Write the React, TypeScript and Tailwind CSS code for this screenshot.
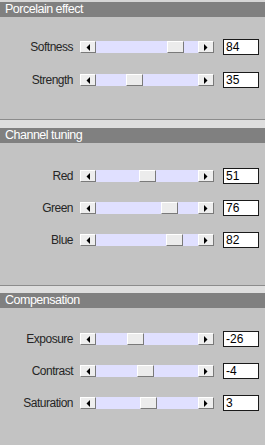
import React from "react";

type Row = { label: string; value: number; min: number; max: number };

function Arrow({ dir }: { dir: "l" | "r" }) {
  return (
    <svg width="4" height="7" viewBox="0 0 4 7" className="block">
      {dir === "l" ? (
        <polygon points="4,0 4,7 0.5,3.5" fill="#000" />
      ) : (
        <polygon points="0,0 0,7 3.5,3.5" fill="#000" />
      )}
    </svg>
  );
}

function Btn({ dir }: { dir: "l" | "r" }) {
  return (
    <div className="w-[16px] h-[12px] flex items-center justify-center bg-[#eeeeee] border border-t-white border-l-white border-r-[#7a7a7a] border-b-[#7a7a7a]">
      <Arrow dir={dir} />
    </div>
  );
}

function Slider({ row }: { row: Row }) {
  const t = (row.value - row.min) / (row.max - row.min);
  const left = Math.round(85 * t);
  return (
    <div className="flex items-center h-[12px] w-[134px]">
      <Btn dir="l" />
      <div className="relative w-[102px] h-[12px] bg-[#e0e0ff]">
        <div
          className="absolute top-0 w-[17px] h-[12px] bg-[#ececec] border border-t-white border-l-white border-r-[#7a7a7a] border-b-[#7a7a7a]"
          style={{ left }}
        />
      </div>
      <Btn dir="r" />
    </div>
  );
}

function SliderRow({ row }: { row: Row }) {
  return (
    <div className="flex items-center h-[16px]">
      <div className="w-[74px] pr-[1px] text-right text-[12px] tracking-[-0.5px] text-[#262626] leading-none">
        {row.label}
      </div>
      <div className="ml-[6px]">
        <Slider row={row} />
      </div>
      <div className="ml-[9px] w-[36px] h-[16px] bg-white border border-[#1a1a1a] pl-[2px] flex items-center text-[12px] leading-none text-black">
        {row.value}
      </div>
    </div>
  );
}

function Header({ title }: { title: string }) {
  return (
    <div className="h-[15px] bg-[#808080] text-white text-[12.5px] tracking-[-0.5px] leading-[15px] pl-[5px]">
      {title}
    </div>
  );
}

export default function App() {
  const s1: Row[] = [
    { label: "Softness", value: 84, min: 0, max: 100 },
    { label: "Strength", value: 35, min: 0, max: 100 },
  ];
  const s2: Row[] = [
    { label: "Red", value: 51, min: 0, max: 100 },
    { label: "Green", value: 76, min: 0, max: 100 },
    { label: "Blue", value: 82, min: 0, max: 100 },
  ];
  const s3: Row[] = [
    { label: "Exposure", value: -26, min: -100, max: 100 },
    { label: "Contrast", value: -4, min: -100, max: 100 },
    { label: "Saturation", value: 3, min: -100, max: 100 },
  ];
  return (
    <div
      className="w-[265px] h-[445px] bg-[#c3c3c3] flex flex-col overflow-hidden"
      style={{ fontFamily: '"Liberation Sans", Arial, sans-serif' }}
    >
      <div className="h-[2px] bg-[#d6d6d6]" />
      <Header title="Porcelain effect" />
      <div className="pt-[22px] pb-[31px] flex flex-col gap-[17px] border-b border-[#8c8c8c]">
        {s1.map((r) => (
          <SliderRow key={r.label} row={r} />
        ))}
      </div>
      <div className="h-[8px] bg-[#dedede]" />
      <Header title="Channel tuning" />
      <div className="pt-[25px] pb-[37px] flex flex-col gap-[16px] border-b border-[#8c8c8c]">
        {s2.map((r) => (
          <SliderRow key={r.label} row={r} />
        ))}
      </div>
      <div className="h-[7px] bg-[#dedede]" />
      <Header title="Compensation" />
      <div className="pt-[23px] flex flex-col gap-[16px]">
        {s3.map((r) => (
          <SliderRow key={r.label} row={r} />
        ))}
      </div>
    </div>
  );
}
